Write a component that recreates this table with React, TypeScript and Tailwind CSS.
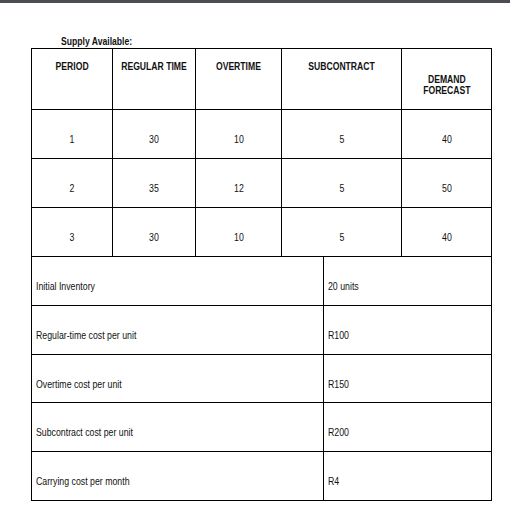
import React from "react";

const HEAD = ["PERIOD", "REGULAR TIME", "OVERTIME", "SUBCONTRACT"];

const SUPPLY = [
  ["1", "30", "10", "5", "40"],
  ["2", "35", "12", "5", "50"],
  ["3", "30", "10", "5", "40"],
];

const COSTS: [string, string, string][] = [
  ["Initial Inventory", "20 units", "h-[49px]"],
  ["Regular-time cost per unit", "R100", "h-[49px]"],
  ["Overtime cost per unit", "R150", "h-[48px]"],
  ["Subcontract cost per unit", "R200", "h-[49px]"],
  ["Carrying cost per month", "R4", "h-[49px]"],
];

const cols = "grid grid-cols-[81px_83px_86px_120px_90px]";

// the document font is a narrow Arial; squeeze Liberation Sans to match
function N({ children, left }: { children: React.ReactNode; left?: boolean }) {
  return (
    <span className={`inline-block whitespace-nowrap scale-x-[0.82] ${left ? "origin-left" : "origin-center"}`}>
      {children}
    </span>
  );
}

export default function App() {
  return (
    <div
      className="h-[514px] w-[510px] bg-white text-[#111]"
      style={{ fontFamily: '"Liberation Sans", Arial, sans-serif' }}
    >
      <div className="h-[3px] w-full bg-[#4b4f54]" />
      <div className="ml-[31px] pt-[33px]">
        <div className="ml-[30px] text-[10.5px] font-bold leading-[11px]">
          <N left>Supply Available:</N>
        </div>
        <div className="mt-[0.5px] w-[461px] border-l border-t border-black">
          <div className={`${cols} h-[61px] border-b border-black`}>
            {HEAD.map((h) => (
              <div
                key={h}
                className="flex justify-center border-r border-black pt-[12px] text-[10.5px] font-bold leading-[11px]"
              >
                <N>{h}</N>
              </div>
            ))}
            <div className="flex justify-center border-r border-black pt-[25px] text-center text-[10.5px] font-bold leading-[11px]">
              <N>
                DEMAND
                <br />
                FORECAST
              </N>
            </div>
          </div>
          {SUPPLY.map((row) => (
            <div key={row[0]} className={`${cols} h-[49px] border-b border-black`}>
              {row.map((v, i) => (
                <div
                  key={i}
                  className="flex justify-center border-r border-black pt-[24px] text-[10.7px] leading-[11px]"
                >
                  <N>{v}</N>
                </div>
              ))}
            </div>
          ))}
        </div>
        <div className="w-[461px] border-l border-black">
          {COSTS.map(([label, value, h]) => (
            <div
              key={label}
              className={`grid grid-cols-[292px_168px] border-b border-black ${h}`}
            >
              <div className="border-r border-black pl-[4px] pt-[24px] text-[10.7px] leading-[11px]">
                <N left>{label}</N>
              </div>
              <div className="border-r border-black pl-[4px] pt-[24px] text-[10.7px] leading-[11px]">
                <N left>{value}</N>
              </div>
            </div>
          ))}
        </div>
      </div>
    </div>
  );
}
